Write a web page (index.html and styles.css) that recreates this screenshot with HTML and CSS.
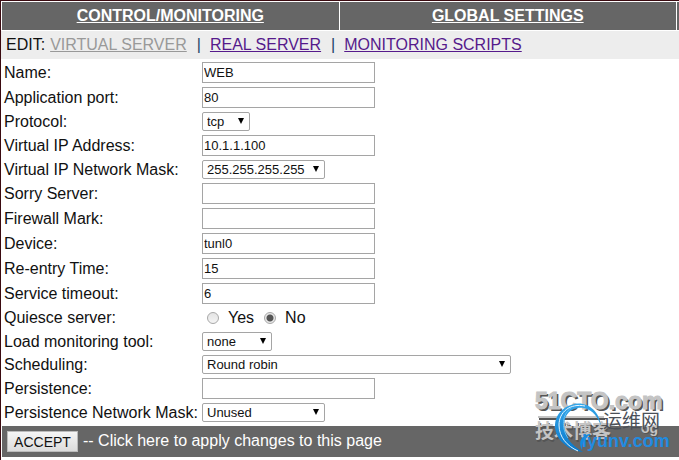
FILE: index.html
```html
<!DOCTYPE html>
<html lang="en">
<head>
<meta charset="utf-8">
<title>Edit virtual server</title>
<link rel="stylesheet" href="styles.css">
</head>
<body>
<div class="page">
  <nav class="tabs">
    <div class="tab"><a href="#">CONTROL/MONITORING</a></div>
    <div class="tab"><a href="#">GLOBAL SETTINGS</a></div>
    <div class="tab"></div>
  </nav>
  <nav class="subnav">
    <span>EDIT:</span>
    <a href="#" class="current">VIRTUAL SERVER</a>
    <span class="bar">|</span>
    <a href="#">REAL SERVER</a>
    <span class="bar">|</span>
    <a href="#">MONITORING SCRIPTS</a>
  </nav>
  <form>
    <div class="fields">
      <div class="row"><label for="name">Name:</label><input type="text" id="name" value="WEB"></div>
      <div class="row"><label for="port">Application port:</label><input type="text" id="port" value="80"></div>
      <div class="row pick"><label for="proto">Protocol:</label><span class="select w-xs"><select id="proto"><option>tcp</option></select></span></div>
      <div class="row"><label for="vip">Virtual IP Address:</label><input type="text" id="vip" value="10.1.1.100"></div>
      <div class="row pick"><label for="mask">Virtual IP Network Mask:</label><span class="select w-md"><select id="mask"><option>255.255.255.255</option></select></span></div>
      <div class="row"><label for="sorry">Sorry Server:</label><input type="text" id="sorry"></div>
      <div class="row"><label for="fw">Firewall Mark:</label><input type="text" id="fw"></div>
      <div class="row"><label for="dev">Device:</label><input type="text" id="dev" value="tunl0"></div>
      <div class="row"><label for="reentry">Re-entry Time:</label><input type="text" id="reentry" value="15"></div>
      <div class="row"><label for="timeout">Service timeout:</label><input type="text" id="timeout" value="6"></div>
      <div class="row quiesce" role="radiogroup" aria-labelledby="q"><span id="q">Quiesce server:</span>
        <span class="radios"><input type="radio" name="quiesce" id="yes"><label for="yes">Yes</label><input type="radio" name="quiesce" id="no" checked><label for="no">No</label></span>
      </div>
      <div class="row pick"><label for="load">Load monitoring tool:</label><span class="select w-sm"><select id="load"><option>none</option></select></span></div>
      <div class="row pick"><label for="sched">Scheduling:</label><span class="select w-lg"><select id="sched"><option>Round robin</option></select></span></div>
      <div class="row"><label for="persist">Persistence:</label><input type="text" id="persist"></div>
      <div class="row pick"><label for="pmask">Persistence Network Mask:</label><span class="select w-md"><select id="pmask"><option>Unused</option></select></span></div>
    </div>
    <div class="actions"><button type="submit">ACCEPT</button><span>-- Click here to apply changes to this page</span></div>
  </form>
  <svg class="mark" width="146" height="76" viewBox="0 0 146 76">
    <defs>
      <linearGradient id="ring" x1="0" y1="0" x2="0" y2="1"><stop offset="0" stop-color="#35a5e8"/><stop offset="1" stop-color="#0878cc"/></linearGradient>
    </defs>
    <g class="cto">
      <text class="shade" x="4" y="31">51CTO.com</text>
      <text class="face" x="2" y="29">51CTO.com</text>
    </g>
    <path d="M6 39H72" stroke="#555" stroke-width="2"/>
    <path d="M5 37H71" stroke="#c4c4c4" stroke-width="2"/>
    <g class="blog">
      <text class="shade" x="3" y="60">技术博客</text>
      <text class="face" x="2" y="58">技术博客</text>
      <text class="og shade" x="109" y="54">og</text>
      <text class="og face" x="108" y="53">og</text>
    </g>
    <text class="site" x="70" y="48">运维网</text>
    <path d="M68 46C66 29 52 20 38 25C20 31 17 51 30 63C36 69 42 71 50 72C40 66 34 60 32 51C28 35 39 26 51 28C60 30 65 37 68 46Z" fill="url(#ring)"/>
    <path d="M52 26C37 23 26 32 26 45C26 57 34 66 45 71" fill="none" stroke="#e4f5ff" stroke-width="1"/>
    <path d="M38 28C29 34 28 48 35 58" fill="none" stroke="#62c0f3" stroke-width="1"/>
    <path d="M58 54C50 54 44 61 49 70C49 62 52 58 58 54Z" fill="#148be0"/>
    <text class="domain" x="49" y="67">iyunv.com</text>
  </svg>
</div>
</body>
</html>
```
FILE: styles.css
```css
* { box-sizing: border-box; }
body {
  margin: 0;
  background: #fff;
  color: #111;
  font: 16px/18px "Liberation Sans", Arial, sans-serif;
}
.page {
  position: relative;
  min-height: 100vh;
  border-left: 1px solid #3a0a10;
  border-top: 1px solid #3a0a10;
  overflow: hidden;
}
.tabs {
  display: grid;
  grid-template-columns: 1fr 1fr 2px;
  gap: 1px;
  padding: 1px 0 1px 1px;
}
.tab {
  height: 28px;
  padding-top: 5px;
  background: #666;
  text-align: center;
  font-weight: bold;
}
.tab a { color: #fff; }
.subnav {
  display: flex;
  align-items: center;
  height: 28px;
  padding-left: 5px;
  background: #ededed;
}
.subnav a { color: #551a8b; }
.subnav .current { margin-left: 5px; color: #999; }
.bar { margin: 0 9px; color: #246; }
.subnav .current, .subnav .current ~ a { padding-right: 1px; }
.fields { padding: 1px 0 2px 3px; }
.row {
  display: grid;
  grid-template-columns: 198px 1fr;
  align-items: center;
  justify-items: start;
  height: 25px;
}
.pick { height: 23px; }
.quiesce { height: 24px; }
.row > input, select {
  border: 1px solid #a5a5a5;
  background: #fff;
  color: #111;
  font: 13px/15px "Liberation Sans", Arial, sans-serif;
}
.row > input { width: 173px; height: 21px; padding: 1px; border-radius: 0; }
.select { position: relative; display: block; max-width: 100%; }
.select::after {
  content: "";
  position: absolute;
  top: 6px;
  right: 6px;
  width: 6px;
  height: 6px;
  background: #000;
  clip-path: polygon(0 0, 100% 0, 50% 100%);
  pointer-events: none;
}
select {
  display: block;
  width: 100%;
  height: 19px;
  padding: 0 4px;
  border-radius: 2px;
  appearance: none;
}
.w-xs { width: 48px; }
.w-sm { width: 70px; }
.w-md { width: 123px; }
.w-lg { width: 309px; }
.radios { display: flex; align-items: center; padding-left: 5px; }
.radios input {
  appearance: none;
  width: 12px;
  height: 12px;
  margin: 0 9px 0 0;
  border: 1px solid #a8a8a8;
  border-radius: 50%;
  background: linear-gradient(#e4e4e4, #f4f4f4);
}
.radios input:checked { background: radial-gradient(circle, #555 0 3px, #e8e8e8 4px); }
.radios label { margin-right: 10px; }
.actions {
  display: flex;
  align-items: center;
  gap: 5px;
  height: 31px;
  margin-left: 1px;
  padding-left: 5px;
  background: #666;
  color: #fff;
}
.actions span { margin-bottom: 2px; }
button {
  width: 71px;
  height: 21px;
  padding: 0;
  border: 1px solid #bbb;
  border-radius: 0;
  background: linear-gradient(#f5f5f5, #dcdcdc);
  color: #111;
  font: 14px/18px "Liberation Sans", Arial, sans-serif;
}
.mark { position: absolute; right: 0; bottom: 4px; }
.cto text { font: bold 23px "Liberation Sans", Arial, sans-serif; }
.cto .face { stroke: #c4c4c4; stroke-width: 1px; }
.blog text { font: bold 19px "Noto Sans CJK SC", sans-serif; }
.mark .og { font: bold 14px "Liberation Sans", sans-serif; }
.shade { fill: #555; }
.face { fill: #c4c4c4; }
.site { fill: #4a5058; font: 19px "Noto Sans CJK SC", sans-serif; }
.domain { fill: #218be0; font: bold 18px "Liberation Sans", Arial, sans-serif; }
```
